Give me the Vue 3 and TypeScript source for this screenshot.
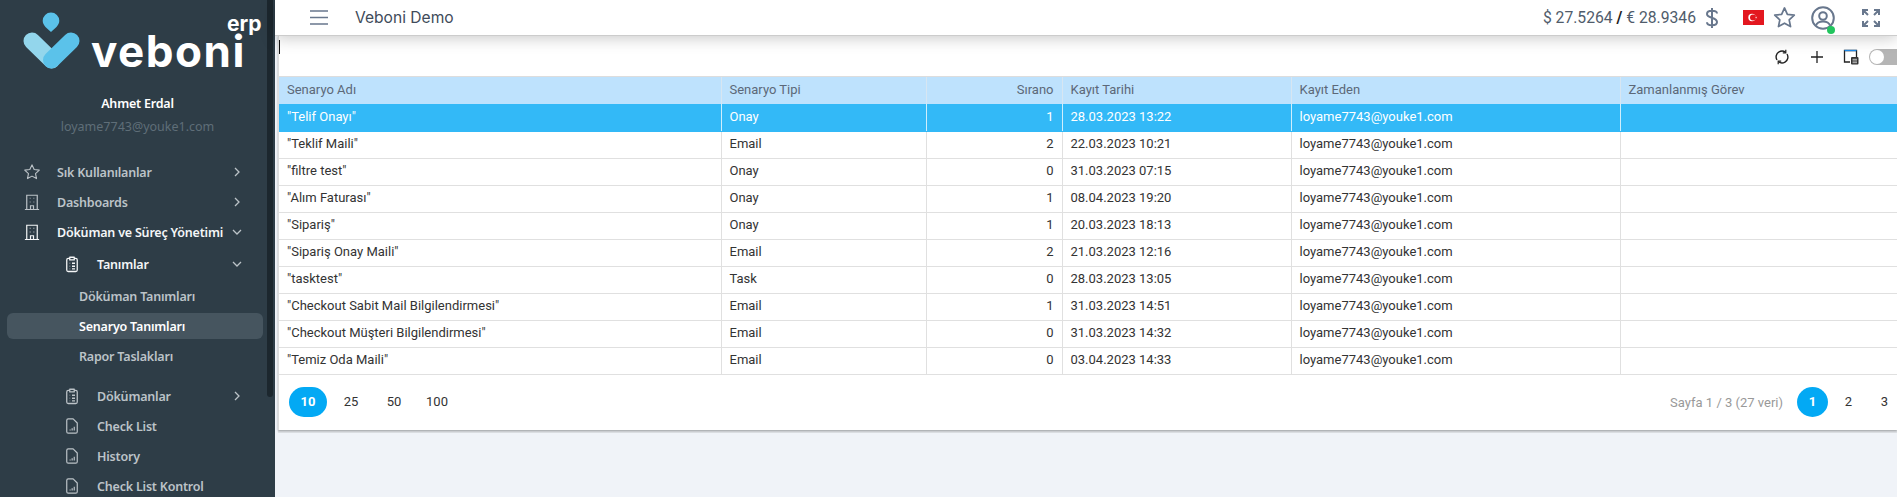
<template>
  <div class="page">
    <!-- Sol menu -->
    <aside class="sidebar">
      <div class="scroll-thumb"></div>
      <div class="logo">
        <svg class="logo-mark" width="90" height="75" viewBox="0 0 90 75">
          <path d="M51 12.500a8.300 8.300 0 0 1 8.300 8.300c0 4.500-4.800 8.200-8.300 11.200c-3.500-3-8.300-6.700-8.300-11.200a8.300 8.300 0 0 1 8.300-8.300z" fill="#5bc2ea" />
          <path d="M32 41L51.500 60" stroke="#93d6ec" stroke-width="17" stroke-linecap="round" fill="none" />
          <path d="M71 41L51.500 60" stroke="#5bc2ea" stroke-width="17" stroke-linecap="round" fill="none" />
        </svg>
        <span class="logo-text">veboni</span>
        <span class="logo-erp">erp</span>
      </div>
      <div class="user-name">Ahmet Erdal</div>
      <div class="user-mail">loyame7743@youke1.com</div>
      <nav class="menu">
        <div
          v-for="item in menu"
          :key="item.label"
          class="menu-item"
          :class="[`level-${item.level}`, { open: item.open, current: item.current, gap: item.gap, tall: item.tall }]"
        >
          <svg v-if="item.icon === 'star'" class="menu-icon" width="18" height="18" viewBox="0 0 24 24" fill="none" stroke="currentColor" stroke-width="1.500" stroke-linejoin="round">
            <path d="M12 2.500l2.900 6.200 6.800.8-5 4.600 1.300 6.700-6-3.300-6 3.300 1.300-6.700-5-4.600 6.800-.8z" />
          </svg>
          <svg v-else-if="item.icon === 'building'" class="menu-icon" width="18" height="18" viewBox="0 0 24 24" fill="none" stroke="currentColor" stroke-width="1.600">
            <path d="M5 22V3h14v19M2.500 22h19M10 22v-5h4v5M9 7h1M14 7h1M9 12h1M14 12h1" />
          </svg>
          <svg v-else-if="item.icon === 'clip'" class="menu-icon" width="18" height="18" viewBox="0 0 24 24" fill="none" stroke="currentColor" stroke-width="1.700" stroke-linejoin="round">
            <path d="M8.500 4.500H7a2 2 0 0 0-2 2V20a2 2 0 0 0 2 2h10a2 2 0 0 0 2-2V6.500a2 2 0 0 0-2-2h-1.500M9 3h6v3.500H9zM9 11h.5M12 11h4M9 15h.5M12 15h4M9 18.500h.5M12 18.500h4" />
          </svg>
          <svg v-else-if="item.icon === 'file'" class="menu-icon" width="18" height="18" viewBox="0 0 24 24" fill="none" stroke="currentColor" stroke-width="1.600" stroke-linejoin="round">
            <path d="M7 2.500h6.500L19 8v11.500a2 2 0 0 1-2 2H7a2 2 0 0 1-2-2v-15a2 2 0 0 1 2-2zM9.500 18v-1.500M12.200 18v-3M15 18v-5" />
          </svg>
          <span class="menu-label">{{ item.label }}</span>
          <svg v-if="item.arrow" class="menu-arrow" :class="{ down: item.open }" width="10" height="10" viewBox="0 0 10 10" fill="none" stroke="currentColor" stroke-width="1.300">
            <path d="M3 1l4 4-4 4" />
          </svg>
        </div>
      </nav>
    </aside>

    <div class="main">
      <!-- Ust bar -->
      <header class="topbar">
        <svg class="burger" width="18" height="15" viewBox="0 0 18 15" fill="none" stroke="#68778d" stroke-width="1.600">
          <path d="M0 1h18M0 7.500h18M0 14h18" />
        </svg>
        <span class="app-title">Veboni Demo</span>
        <span class="rates">$ 27.5264 <b>/</b> € 28.9346</span>
        <svg class="dollar" width="14" height="20" viewBox="0 0 14 20" fill="none" stroke="#68778d" stroke-width="2">
          <path d="M12 5.500C12 3.500 10 2.800 7 2.800S2 4 2 6c0 4.500 10 3 10 8c0 2-2 3.200-5 3.200s-5-1-5-3M7 0v20" />
        </svg>
        <svg class="flag" width="21" height="15" viewBox="0 0 21 15">
          <rect width="21" height="15" fill="#e3171f" />
          <circle cx="9" cy="7.500" r="3.700" fill="#fff" />
          <circle cx="10" cy="7.500" r="3" fill="#e3171f" />
          <path d="M12 7.500l2.300-.9-.9 .9.900 .9z" fill="#fff" />
        </svg>
        <svg class="star" width="23" height="23" viewBox="0 0 24 24" fill="none" stroke="#68778d" stroke-width="1.800" stroke-linejoin="round">
          <path d="M12 2l3 6.700 7.200.8-5.300 4.900 1.400 7.100-6.300-3.600-6.300 3.600 1.400-7.100L1.800 9.500 9 8.700z" />
        </svg>
        <div class="avatar">
          <svg width="24" height="24" viewBox="0 0 24 24" fill="none" stroke="#68778d" stroke-width="2">
            <circle cx="12" cy="12" r="10.800" />
            <circle cx="12" cy="10" r="3.800" />
            <path d="M5 19.500c1-3 3.500-4 7-4s6 1 7 4" />
          </svg>
          <span class="online"></span>
        </div>
        <svg class="expand" width="18" height="18" viewBox="0 0 18 18" fill="none" stroke="#68778d" stroke-width="2">
          <path d="M1 6V1h5M1 1l5 5M12 1h5v5M17 1l-5 5M1 12v5h5M1 17l5-5M12 17h5v-5M17 17l-5-5" />
        </svg>
      </header>

      <section class="card">
        <span class="caret"></span>
        <div class="toolbar">
          <svg width="16" height="16" viewBox="0 0 16 16" fill="none" stroke="#222" stroke-width="1.400">
            <path d="M3 11A5.800 5.800 0 0 1 5 2.900 5.800 5.800 0 0 1 11.500 3.200M13 5a5.800 5.800 0 0 1-2 8.100 5.800 5.800 0 0 1-6.500-.3" />
            <path d="M11.800 .8v3h-3M4.200 15.200v-3h3" stroke-width="1.200" />
          </svg>
          <svg class="tool-plus" width="14" height="14" viewBox="0 0 14 14" stroke="#222" stroke-width="1.300">
            <path d="M7 1v12M1 7h12" />
          </svg>
          <svg class="tool-panel" width="16" height="16" viewBox="0 0 16 16" fill="none">
            <path d="M7 13H1.500V1.500h12V8" stroke="#222" stroke-width="1.300" />
            <path d="M1.500 1.500h12" stroke="#1e88e5" stroke-width="1.300" />
            <rect x="8" y="8" width="7.500" height="7.500" rx="1" fill="#333" />
            <path d="M9.500 10.300h4.500M9.500 12h4.500M9.500 13.700h4.500" stroke="#fff" stroke-width=".7" />
          </svg>
          <span class="switch"><span class="knob"></span></span>
        </div>

        <table class="grid">
          <colgroup>
            <col class="c-name" />
            <col class="c-type" />
            <col class="c-no" />
            <col class="c-date" />
            <col class="c-user" />
            <col class="c-task" />
          </colgroup>
          <thead>
            <tr>
              <th>Senaryo Adı</th>
              <th>Senaryo Tipi</th>
              <th class="num">Sırano</th>
              <th>Kayıt Tarihi</th>
              <th>Kayıt Eden</th>
              <th>Zamanlanmış Görev</th>
            </tr>
          </thead>
          <tbody>
            <tr v-for="(row, index) in rows" :key="row.name" :class="{ selected: index === 0 }">
              <td>{{ row.name }}</td>
              <td>{{ row.type }}</td>
              <td class="num">{{ row.no }}</td>
              <td>{{ row.date }}</td>
              <td>loyame7743@youke1.com</td>
              <td></td>
            </tr>
          </tbody>
        </table>

        <footer class="pager">
          <div class="sizes">
            <span v-for="size in sizes" :key="size" class="size" :class="{ active: size === 10 }">{{ size }}</span>
          </div>
          <div class="pages">
            <span class="page-info">Sayfa 1 / 3 (27 veri)</span>
            <span v-for="p in 3" :key="p" class="page-no" :class="{ active: p === 1 }">{{ p }}</span>
          </div>
        </footer>
      </section>
    </div>
  </div>
</template>

<script setup lang="ts">
interface MenuItem {
  label: string;
  level: number;
  icon?: string;
  arrow?: boolean;
  open?: boolean;
  current?: boolean;
  gap?: boolean;
  tall?: boolean;
}

interface Row {
  name: string;
  type: string;
  no: number;
  date: string;
}

const menu: MenuItem[] = [
  { label: 'Sık Kullanılanlar', level: 1, icon: 'star', arrow: true },
  { label: 'Dashboards', level: 1, icon: 'building', arrow: true },
  { label: 'Döküman ve Süreç Yönetimi', level: 1, icon: 'building', arrow: true, open: true },
  { label: 'Tanımlar', level: 2, icon: 'clip', arrow: true, open: true, tall: true },
  { label: 'Döküman Tanımları', level: 3, tall: true },
  { label: 'Senaryo Tanımları', level: 3, current: true },
  { label: 'Rapor Taslakları', level: 3 },
  { label: 'Dökümanlar', level: 2, icon: 'clip', arrow: true, gap: true },
  { label: 'Check List', level: 2, icon: 'file' },
  { label: 'History', level: 2, icon: 'file' },
  { label: 'Check List Kontrol', level: 2, icon: 'file' },
];

const rows: Row[] = [
  { name: '"Telif Onayı"', type: 'Onay', no: 1, date: '28.03.2023 13:22' },
  { name: '"Teklif Maili"', type: 'Email', no: 2, date: '22.03.2023 10:21' },
  { name: '"filtre test"', type: 'Onay', no: 0, date: '31.03.2023 07:15' },
  { name: '"Alım Faturası"', type: 'Onay', no: 1, date: '08.04.2023 19:20' },
  { name: '"Sipariş"', type: 'Onay', no: 1, date: '20.03.2023 18:13' },
  { name: '"Sipariş Onay Maili"', type: 'Email', no: 2, date: '21.03.2023 12:16' },
  { name: '"tasktest"', type: 'Task', no: 0, date: '28.03.2023 13:05' },
  { name: '"Checkout Sabit Mail Bilgilendirmesi"', type: 'Email', no: 1, date: '31.03.2023 14:51' },
  { name: '"Checkout Müşteri Bilgilendirmesi"', type: 'Email', no: 0, date: '31.03.2023 14:32' },
  { name: '"Temiz Oda Maili"', type: 'Email', no: 0, date: '03.04.2023 14:33' },
];

const sizes = [10, 25, 50, 100];
</script>

<style>
html,
body {
  margin: 0;
  overflow: hidden;
  background: #f0f3f8;
}
</style>

<style scoped>
.page {
  display: flex;
  height: 497px;
  overflow: hidden;
  font-family: Roboto, sans-serif;
  color: #333;
}

/* Sol menu */
.sidebar {
  position: relative;
  flex: 0 0 275px;
  background: #2e3d47;
  font-family: 'Noto Sans', sans-serif;
  overflow: hidden;
}

.scroll-thumb {
  position: absolute;
  top: 0;
  left: 267px;
  width: 6px;
  height: 397px;
  background: #1c272e;
  border-radius: 0 0 3px 3px;
}

.logo {
  position: relative;
  display: flex;
  align-items: flex-start;
  height: 92px;
}

.logo-mark {
  flex: none;
}

.logo-text {
  display: block;
  margin-left: 1px;
  margin-top: 36px;
  font-family: Inter, sans-serif;
  font-weight: 700;
  font-size: 44px;
  letter-spacing: 1.500px;
  line-height: 30px;
  color: #fff;
}

.logo-erp {
  position: absolute;
  top: 15px;
  left: 227px;
  display: block;
  font-family: Inter, sans-serif;
  font-weight: 700;
  font-size: 21px;
  line-height: 18px;
  color: #fff;
}

.user-name {
  text-align: center;
  font-size: 12.500px;
  letter-spacing: -0.2px;
  font-weight: 600;
  line-height: 24px;
  color: #fff;
}

.user-mail {
  text-align: center;
  font-size: 12.500px;
  line-height: 22px;
  color: #5f6e78;
}

.menu {
  margin-top: 19px;
}

.menu-item {
  display: flex;
  align-items: center;
  height: 30px;
  color: #bcc3c8;
  font-size: 12.500px;
  letter-spacing: -0.2px;
  font-weight: 600;
}

.menu-item.tall {
  margin-top: 2px;
}

.menu-item.gap {
  margin-top: 10px;
}

.menu-item.open {
  color: #f4f6f7;
}

.level-1 {
  padding-left: 23px;
}

.level-2 {
  padding-left: 63px;
}

.level-3 {
  padding-left: 79px;
}

.menu-icon {
  flex: none;
  margin-right: 16px;
}

.menu-item.current {
  position: relative;
  z-index: 0;
  color: #fff;
}

.menu-item.current::before {
  content: '';
  position: absolute;
  z-index: -1;
  left: 7px;
  top: 2px;
  width: 256px;
  height: 26px;
  border-radius: 6px;
  background: #46555f;
}

.menu-arrow {
  position: absolute;
  left: 232px;
  color: #bcc3c8;
}

.menu-arrow.down {
  transform: rotate(90deg);
}

.main {
  flex: 1;
  min-width: 0;
}

/* Ust bar */
.topbar {
  position: relative;
  z-index: 1;
  display: flex;
  align-items: center;
  height: 35px;
  background: #fff;
  border-bottom: 1px solid #ccc;
  box-shadow: 0 2px 16px rgba(0, 0, 0, 0.22);
}

.burger {
  margin-left: 35px;
}

.app-title {
  margin-left: 27px;
  font-family: Inter, sans-serif;
  font-size: 15.600px;
  color: #414b5a;
}

.rates {
  margin-left: auto;
  font-size: 15.700px;
  color: #505c6b;
}

.rates b {
  color: #222;
}

.dollar {
  margin-left: 9px;
}

.flag {
  margin-left: 24px;
}

.star {
  margin-left: 9px;
}

.avatar {
  position: relative;
  display: flex;
  margin-left: 15px;
}

.online {
  position: absolute;
  top: 20px;
  left: 16px;
  width: 8px;
  height: 8px;
  border-radius: 50%;
  background: #22c55e;
}

.expand {
  margin-left: 27px;
  margin-right: 17px;
}

/* Tabela */
.card {
  position: relative;
  margin-left: 3px;
  background: #fff;
  border-left: 1px solid #ddd;
  box-shadow: 0 1px 2px rgba(0, 0, 0, 0.3), 0 3px 0 #dfe2e6;
}

.caret {
  position: absolute;
  z-index: 2;
  left: 0;
  top: 4px;
  width: 1px;
  height: 14px;
  background: #111;
}

.toolbar {
  display: flex;
  align-items: center;
  justify-content: flex-end;
  height: 41px;
  padding-top: 1px;
  box-sizing: border-box;
  border-bottom: 1px solid #ddd;
}

.tool-plus {
  margin-left: 20px;
}

.tool-panel {
  margin-left: 19px;
}

.switch {
  position: relative;
  display: block;
  flex: none;
  width: 28px;
  height: 16px;
  margin-left: 10px;
  border-radius: 8px 0 0 8px;
  background: #b5b5b5;
}

.knob {
  position: absolute;
  left: 1px;
  top: 1px;
  width: 14px;
  height: 14px;
  border-radius: 50%;
  background: #fff;
}

.grid {
  width: 1618px;
  table-layout: fixed;
  border-collapse: collapse;
  font-size: 13px;
}

.c-name {
  width: 442px;
}

.c-type {
  width: 205px;
}

.c-no {
  width: 136px;
}

.c-date {
  width: 229px;
}

.c-user {
  width: 329px;
}

.c-task {
  width: 277px;
}

.grid th,
.grid td {
  height: 27px;
  padding: 0 8px 2px;
  box-sizing: border-box;
  border-right: 1px solid #e0e0e0;
  border-bottom: 1px solid #e0e0e0;
  text-align: left;
  white-space: nowrap;
}

.grid th {
  background: #bee2fd;
  border-bottom: none;
  border-right-color: #d7e6f2;
  font-weight: 400;
  color: #5c6878;
}

.grid .num {
  text-align: right;
}

.grid .selected td {
  background: #33b9f7;
  color: #fff;
  border-bottom-color: #33b9f7;
  border-right-color: #cfeefc;
}

.pager {
  display: flex;
  align-items: center;
  justify-content: space-between;
  height: 55px;
  padding: 0 0 0 10px;
  overflow: hidden;
  font-size: 13px;
}

.sizes,
.pages {
  display: flex;
  align-items: center;
}

.pages {
  margin-right: -8px;
}

.size {
  width: 38px;
  height: 30px;
  margin-right: 5px;
  border-radius: 15px;
  line-height: 30px;
  text-align: center;
}

.size.active {
  background: #03a9f4;
  color: #fff;
  font-weight: 700;
}

.page-info {
  margin-right: 14px;
  font-size: 13px;
  color: #999;
}

.page-no {
  width: 31px;
  height: 30px;
  margin-right: 5px;
  border-radius: 50%;
  line-height: 30px;
  text-align: center;
}

.page-no.active {
  background: #03a9f4;
  color: #fff;
  font-weight: 700;
}
</style>
